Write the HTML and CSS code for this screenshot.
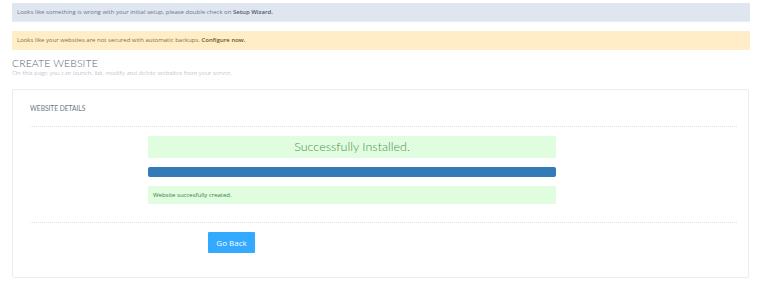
FILE: index.html
```html
<!DOCTYPE html>
<html lang="en">
<head>
    <meta charset="UTF-8">
    <meta name="viewport" content="width=device-width, initial-scale=1.0">
    <title>Create Website</title>
    <link rel="stylesheet" href="styles.css">
</head>
<body>
    <div class="alert alert-info">Looks like something is wrong with your initial setup, please double check on <b>Setup Wizard.</b></div>
    <div class="alert alert-warning">Looks like your websites are not secured with automatic backups. <b>Configure now.</b></div>

    <div class="page-title">
        <h2>CREATE WEBSITE</h2>
        <p>On this page you can launch, list, modify and delete websites from your server.</p>
    </div>

    <div class="panel">
        <h3 class="panel-title">WEBSITE DETAILS</h3>
        <div class="result">
            <div class="success-box big">Successfully Installed.</div>
            <div class="progress"><div class="progress-bar"></div></div>
            <div class="success-box small">Website succesfully created.</div>
        </div>
        <div class="actions">
            <button class="btn-primary">Go Back</button>
        </div>
    </div>
</body>
</html>
```

FILE: styles.css
```css
body, html {
    margin: 0;
    background-color: #ffffff;
    font-family: "Open Sans", sans-serif;
}
body {
    padding: 3px 10px 0 12px;
}
.alert {
    height: 18px;
    line-height: 18px;
    padding: 0 5px;
    font-size: 6px;
    border-radius: 1px;
}
.alert b {
    font-weight: 600;
}
.alert-info {
    background-color: #dfe6f0;
    color: #6a7688;
    border-bottom: 1px solid #e9edf3;
}
.alert-info b {
    color: #4f5a6a;
}
.alert-warning {
    margin-top: 9px;
    height: 19px;
    line-height: 19px;
    background-color: #ffedc8;
    color: #8a6d3b;
}
.alert-warning b {
    color: #6e5520;
}
.page-title {
    margin-top: 8px;
}
.page-title h2 {
    margin: 0;
    font-family: Lato, sans-serif;
    font-weight: 300;
    font-size: 10.5px;
    line-height: 11px;
    color: #5b6777;
    letter-spacing: 0.1px;
}
.page-title p {
    margin: 0;
    font-family: Lato, sans-serif;
    font-weight: 300;
    font-size: 6.5px;
    line-height: 7px;
    color: #9aa3ad;
}
.panel {
    margin-top: 13px;
    width: 737px;
    border: 1px solid #ececec;
    border-radius: 2px;
    box-sizing: border-box;
    padding: 0 11px 24px 17px;
}
.panel-title {
    margin: 0;
    height: 36px;
    line-height: 36px;
    font-family: Lato, sans-serif;
    font-weight: 400;
    font-size: 6.6px;
    color: #6b7686;
    border-bottom: 1px dotted #e3e3e3;
}
.result {
    padding: 9px 0 18px 118px;
    border-bottom: 1px dotted #e3e3e3;
}
.success-box {
    width: 408px;
    background-color: #e0fde0;
    color: #3c7a3c;
}
.success-box.big {
    height: 22px;
    line-height: 22px;
    text-align: center;
    font-family: Lato, sans-serif;
    font-weight: 300;
    font-size: 12.5px;
    color: #4f8f4f;
}
.success-box.small {
    height: 18px;
    line-height: 18px;
    padding-left: 5px;
    box-sizing: border-box;
    font-size: 6px;
}
.progress {
    width: 408px;
    margin: 9px 0;
}
.progress-bar {
    height: 10px;
    background-color: #337ab7;
    border-radius: 2px;
}
.actions {
    padding-top: 9px;
    line-height: 0;
}
.btn-primary {
    margin-left: 178px;
    width: 47px;
    height: 21px;
    border: none;
    border-radius: 1px;
    background-color: #33aaff;
    color: #ffffff;
    font-family: "Open Sans", sans-serif;
    font-size: 8px;
    line-height: 21px;
    padding: 0;
    vertical-align: top;
}
```
